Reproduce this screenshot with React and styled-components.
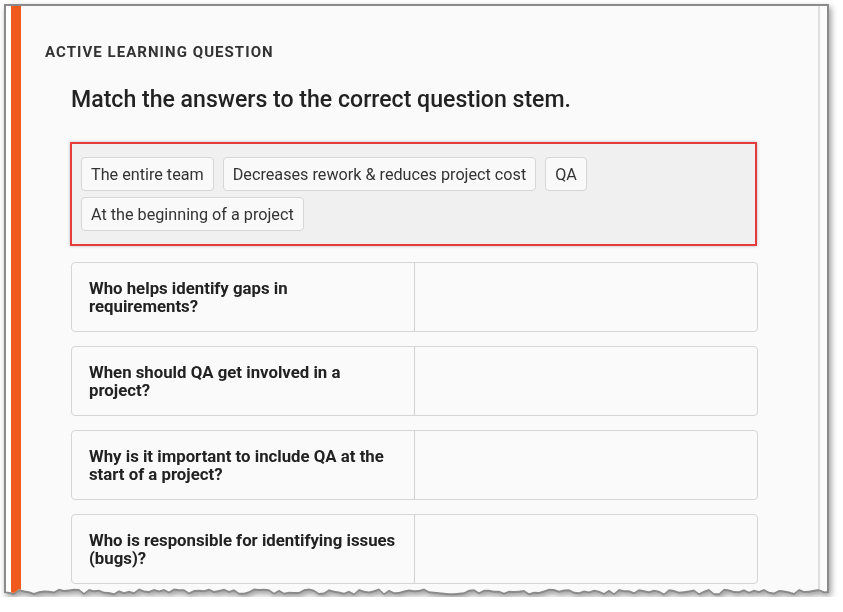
import React from 'react';
import styled, { createGlobalStyle } from 'styled-components';

const FRAME_W = 825;
const FRAME_H = 593;

// deterministic ragged bottom edge, like a torn screenshot
const tear = (() => {
  let seed = 7;
  const rand = () => {
    seed = (seed * 9301 + 49297) % 233280;
    return seed / 233280;
  };
  const pts = [];
  for (let x = 0; x <= FRAME_W; x += 5) {
    pts.push([x, FRAME_H - 4 + (rand() - 0.5) * 5]);
  }
  return pts;
})();

const polygon = (dx, dy) =>
  `polygon(0px 0px, ${FRAME_W}px 0px, ${tear
    .map(([x, y]) => `${(FRAME_W - x) + dx}px ${y + dy}px`)
    .join(', ')})`;

const GlobalStyle = createGlobalStyle`
  body {
    margin: 0;
    background: #ffffff;
    font-family: Roboto, "Liberation Sans", Arial, sans-serif;
  }
`;

const Shadow = styled.div`
  margin: 4px 0 0 4px;
  width: ${FRAME_W}px;
  height: ${FRAME_H}px;
  filter: drop-shadow(2px 3px 3px rgba(0, 0, 0, 0.4));
`;

const Frame = styled.div`
  box-sizing: border-box;
  width: 100%;
  height: 100%;
  padding: 2px 2px 0 2px;
  background: #8a8a8a;
  clip-path: ${polygon(0, 0)};
`;

const Sheet = styled.div`
  display: flex;
  height: 100%;
  background: #fafafa;
  overflow: hidden;
  clip-path: ${polygon(-2, -4)};
`;

const Gutter = styled.div`
  width: 5px;
  background: #ffffff;
`;

const AccentBar = styled.div`
  width: 10px;
  background: #f05a1c;
`;

const Content = styled.div`
  flex: 1;
  padding: 37px 60px 0 24px;
`;

const Track = styled.div`
  width: 7px;
  border-left: 2px solid #dedede;
  background: #fbfbfb;
`;

const Eyebrow = styled.div`
  font-size: 15px;
  line-height: 18px;
  font-weight: 700;
  letter-spacing: 1.05px;
  color: #333333;
`;

const Body = styled.div`
  padding-left: 26px;
`;

const Heading = styled.h2`
  margin: 25px 0 28px;
  font-size: 23.1px;
  line-height: 28px;
  font-weight: 500;
  color: #222222;
`;

const AnswerBank = styled.div`
  display: flex;
  flex-wrap: wrap;
  gap: 6px 9px;
  margin-left: -1px;
  width: 687px;
  box-sizing: border-box;
  padding: 13px 9px;
  border: 2px solid #e63b3b;
  background: #f0f0f0;
  box-shadow: 0 0 3px rgba(0, 0, 0, 0.25);
`;

const Chip = styled.div`
  display: flex;
  align-items: center;
  height: 34px;
  box-sizing: border-box;
  padding: 0 9px;
  border: 1px solid #d6d6d6;
  border-radius: 4px;
  background: #f9f9f9;
  font-size: 16.2px;
  color: #333333;
`;

const Pairs = styled.div`
  display: flex;
  flex-direction: column;
  gap: 14px;
  margin-top: 16px;
  width: 687px;
`;

const Pair = styled.div`
  display: grid;
  grid-template-columns: 343px 1fr;
  height: 70px;
  box-sizing: border-box;
  border: 1px solid #d6d6d6;
  border-radius: 4px;
  background: #fafafa;
`;

const Stem = styled.div`
  display: flex;
  align-items: center;
  padding: 0 18px 0 17px;
  border-right: 1px solid #d0d0d0;
  font-size: 16.8px;
  line-height: 18px;
  font-weight: 700;
  color: #222222;
`;

const Drop = styled.div``;

const answers = [
  'The entire team',
  'Decreases rework & reduces project cost',
  'QA',
  'At the beginning of a project',
];

const stems = [
  'Who helps identify gaps in requirements?',
  'When should QA get involved in a project?',
  'Why is it important to include QA at the start of a project?',
  'Who is responsible for identifying issues (bugs)?',
];

export default function App() {
  return (
    <>
      <GlobalStyle />
      <Shadow>
        <Frame>
          <Sheet>
            <Gutter />
            <AccentBar />
            <Content>
              <Eyebrow>ACTIVE LEARNING QUESTION</Eyebrow>
              <Body>
                <Heading>Match the answers to the correct question stem.</Heading>
                <AnswerBank>
                  {answers.map(a => (
                    <Chip key={a}>{a}</Chip>
                  ))}
                </AnswerBank>
                <Pairs>
                  {stems.map(s => (
                    <Pair key={s}>
                      <Stem>{s}</Stem>
                      <Drop />
                    </Pair>
                  ))}
                </Pairs>
              </Body>
            </Content>
            <Track />
          </Sheet>
        </Frame>
      </Shadow>
    </>
  );
}
